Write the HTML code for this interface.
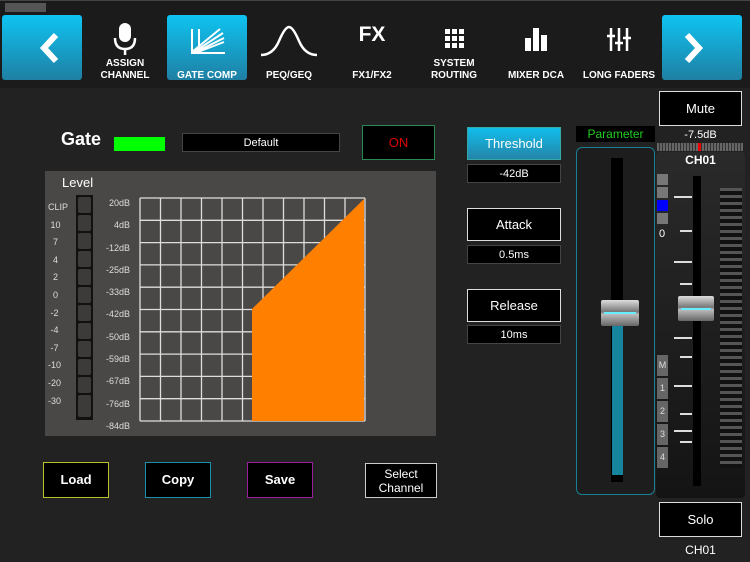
<!DOCTYPE html><html><head><style>
*{margin:0;padding:0;box-sizing:border-box}
body{width:750px;height:562px;background:#222;font-family:"Liberation Sans",sans-serif;position:relative;overflow:hidden;color:#fff}
.a{position:absolute}
.nav{top:15px;width:80px;height:65px;background:linear-gradient(#0ec4f2,#1f7fa3);border-radius:3px}
.tab{top:15px;width:80px;height:65px;text-align:center;font-size:10px;font-weight:bold;line-height:12px}
.tab .l{position:absolute;bottom:-2px;left:0;right:0}
.btn{border:1px solid #ddd;background:#000;text-align:center;font-size:13px}
.val{background:#000;border:1px solid #444;font-size:11px;text-align:center;line-height:18px}
</style></head><body>
<div class="a" style="left:0;top:0;width:750px;height:88px;background:#1b1b1b;border-top:1px solid #444"></div>
<div class="a" style="left:5px;top:3px;width:41px;height:9px;background:#555"></div>
<div class="a nav" style="left:2px"><svg width="80" height="65"><path d="M54 20 L42 33 L54 46" stroke="#fff" stroke-width="6" fill="none"/></svg></div>
<div class="a tab" style="left:85px"><svg width="80" height="44"><rect x="34" y="8" width="12" height="19" rx="6" fill="#fff"/><path d="M30 23 Q30 34 40 34 Q50 34 50 23" stroke="#fff" stroke-width="2.5" fill="none"/><rect x="38.8" y="34" width="2.5" height="6" fill="#fff"/></svg><div class="l">ASSIGN<br>CHANNEL</div></div>
<div class="a tab" style="left:167px;background:linear-gradient(#0ec4f2,#1f7fa3);border-radius:3px"><svg width="80" height="44"><path d="M25 14 V38 H58 M25 37 L53 14 M27 37 L56 18 M29 37 L57 23 M31 37 L57 27" stroke="#fff" stroke-width="2" fill="none"/><path d="M32 14 V31" stroke="#fff" stroke-width="2"/></svg><div class="l">GATE COMP</div></div>
<div class="a tab" style="left:249px"><svg width="80" height="44"><path d="M12 40 Q24 40 30 26 Q36 12 40 12 Q44 12 50 26 Q56 40 68 40" stroke="#fff" stroke-width="2.5" fill="none"/></svg><div class="l">PEQ/GEQ</div></div>
<div class="a tab" style="left:332px"><div style="font-size:21px;padding-top:14px">FX</div><div class="l">FX1/FX2</div></div>
<div class="a tab" style="left:414px"><svg width="80" height="44"><g fill="#fff"><rect x="31" y="14" width="5" height="5"/><rect x="38" y="14" width="5" height="5"/><rect x="45" y="14" width="5" height="5"/><rect x="31" y="21" width="5" height="5"/><rect x="38" y="21" width="5" height="5"/><rect x="45" y="21" width="5" height="5"/><rect x="31" y="28" width="5" height="5"/><rect x="38" y="28" width="5" height="5"/><rect x="45" y="28" width="5" height="5"/></g></svg><div class="l">SYSTEM<br>ROUTING</div></div>
<div class="a tab" style="left:496px"><svg width="80" height="44"><g fill="#fff"><rect x="29" y="23" width="6" height="13"/><rect x="37" y="13" width="6" height="23"/><rect x="45" y="20" width="6" height="16"/></g></svg><div class="l">MIXER DCA</div></div>
<div class="a tab" style="left:579px"><svg width="80" height="44"><g stroke="#fff" stroke-width="2.5"><path d="M32 13V36M40 13V36M48 13V36M28 21H36M36 28H44M44 23H52"/></g></svg><div class="l">LONG FADERS</div></div>
<div class="a nav" style="left:662px"><svg width="80" height="65"><path d="M25 20 L37 33 L25 46" stroke="#fff" stroke-width="6" fill="none"/></svg></div>

<div class="a" style="left:61px;top:129px;font-size:18px;font-weight:bold">Gate</div>
<div class="a" style="left:114px;top:137px;width:51px;height:14px;background:#0f0"></div>
<div class="a val" style="left:182px;top:133px;width:158px;height:19px;font-size:11px">Default</div>
<div class="a" style="left:362px;top:125px;width:73px;height:35px;background:#000;border:1px solid #2a8a55;color:#d00;font-size:13px;text-align:center;line-height:33px">ON</div>

<div class="a" style="left:45px;top:171px;width:391px;height:265px;background:#4a4847"></div>
<div class="a" style="left:62px;top:175px;font-size:13px">Level</div>
<div class="a" style="left:76px;top:195px;width:17px;height:225px;background:#111"></div>
<svg class="a" style="left:76px;top:195px" width="17" height="225"><g fill="#3d3b3a">
<rect x="2" y="2" width="13" height="16" rx="2"/><rect x="2" y="20" width="13" height="16" rx="2"/><rect x="2" y="38" width="13" height="16" rx="2"/><rect x="2" y="56" width="13" height="16" rx="2"/><rect x="2" y="74" width="13" height="16" rx="2"/><rect x="2" y="92" width="13" height="16" rx="2"/><rect x="2" y="110" width="13" height="16" rx="2"/><rect x="2" y="128" width="13" height="16" rx="2"/><rect x="2" y="146" width="13" height="16" rx="2"/><rect x="2" y="164" width="13" height="16" rx="2"/><rect x="2" y="182" width="13" height="16" rx="2"/><rect x="2" y="200" width="13" height="22" rx="2"/></g></svg>
<div class="a" style="left:48px;top:199px;font-size:9px;color:#ddd;line-height:17.6px;width:22px">CLIP<br>&nbsp;10<br>&nbsp;&nbsp;7<br>&nbsp;&nbsp;4<br>&nbsp;&nbsp;2<br>&nbsp;&nbsp;0<br>&nbsp;-2<br>&nbsp;-4<br>&nbsp;-7<br>-10<br>-20<br>-30</div>
<div class="a" style="left:90px;top:192px;font-size:9px;color:#ddd;line-height:22.3px;width:40px;text-align:right">20dB<br>4dB<br>-12dB<br>-25dB<br>-33dB<br>-42dB<br>-50dB<br>-59dB<br>-67dB<br>-76dB<br>-84dB</div>
<svg class="a" style="left:138px;top:196px" width="230" height="228">
<g stroke="#ddd" stroke-width="1.3">
<path d="M2 2V225M22.5 2V225M43 2V225M63.5 2V225M84 2V225M104.5 2V225M125 2V225M145.5 2V225M166 2V225M186.5 2V225M207 2V225M227 2V225"/>
<path d="M2 2H227M2 24.3H227M2 46.6H227M2 68.9H227M2 91.2H227M2 113.5H227M2 135.8H227M2 158.1H227M2 180.4H227M2 202.7H227M2 225H227"/>
</g>
<polygon points="114,225 114,113 226,3 226,225" fill="#ff8000"/>
</svg>

<div class="a" style="left:467px;top:127px;width:94px;height:33px;background:linear-gradient(#11bdeb,#2585a8);border:1px solid #3aa;text-align:center;line-height:31px;font-size:13px">Threshold</div>
<div class="a val" style="left:467px;top:164px;width:94px;height:19px">-42dB</div>
<div class="a btn" style="left:467px;top:208px;width:94px;height:33px;line-height:31px">Attack</div>
<div class="a val" style="left:467px;top:245px;width:94px;height:19px">0.5ms</div>
<div class="a btn" style="left:467px;top:289px;width:94px;height:33px;line-height:31px">Release</div>
<div class="a val" style="left:467px;top:325px;width:94px;height:19px">10ms</div>

<div class="a" style="left:43px;top:462px;width:66px;height:36px;background:#000;border:1px solid #b9bd2a;text-align:center;line-height:34px;font-size:13px;font-weight:bold">Load</div>
<div class="a" style="left:145px;top:462px;width:66px;height:36px;background:#000;border:1px solid #1a8fab;text-align:center;line-height:34px;font-size:13px;font-weight:bold">Copy</div>
<div class="a" style="left:247px;top:462px;width:66px;height:36px;background:#000;border:1px solid #9a1f9e;text-align:center;line-height:34px;font-size:13px;font-weight:bold">Save</div>
<div class="a" style="left:365px;top:463px;width:72px;height:35px;background:#000;border:1px solid #ccc;text-align:center;font-size:12px;line-height:14px;padding-top:3px">Select<br>Channel</div>

<div class="a" style="left:576px;top:126px;width:79px;height:16px;background:#000;color:#2c2;font-size:12px;text-align:center;line-height:16px">Parameter</div>
<div class="a" style="left:576px;top:147px;width:79px;height:348px;border:1.5px solid #1a7e95;border-radius:6px;background:#1d1d1d"></div>
<div class="a" style="left:611px;top:158px;width:12px;height:324px;background:#000"></div>
<div class="a" style="left:612px;top:322px;width:11px;height:153px;background:#16849d"></div>
<div class="a" style="left:601px;top:300px;width:38px;height:26px;background:linear-gradient(#ddd,#777 45%,#bbb 55%,#666);border-radius:2px"></div>
<div class="a" style="left:604px;top:312px;width:32px;height:2px;background:#6ef"></div>

<div class="a btn" style="left:659px;top:91px;width:83px;height:35px;line-height:33px">Mute</div>
<div class="a" style="left:659px;top:129px;width:83px;text-align:center;font-size:11px">-7.5dB</div>
<div class="a" style="left:657px;top:143px;width:86px;height:8px;background:repeating-linear-gradient(90deg,#666 0 2px,#333 2px 3px)"></div>
<div class="a" style="left:698px;top:143px;width:3px;height:8px;background:#e00"></div>
<div class="a" style="left:656px;top:152px;width:89px;height:346px;background:linear-gradient(#2a2a2a,#141414);border-radius:4px"></div>
<div class="a" style="left:656px;top:153px;width:89px;text-align:center;font-size:12px;font-weight:bold">CH01</div>
<div class="a" style="left:657px;top:174px;width:11px;height:11px;background:#777"></div>
<div class="a" style="left:657px;top:187px;width:11px;height:11px;background:#777"></div>
<div class="a" style="left:657px;top:200px;width:11px;height:11px;background:#00f"></div>
<div class="a" style="left:657px;top:213px;width:11px;height:11px;background:#777"></div>
<div class="a" style="left:659px;top:228px;font-size:11px">0</div>
<div class="a" style="left:693px;top:176px;width:8px;height:310px;background:#000"></div>
<svg class="a" style="left:672px;top:190px" width="22" height="290"><g stroke="#ddd" stroke-width="2"><path d="M2 7H20M8 41H20M2 72H20M8 94H20M2 148H20M8 167H20M2 196H20M8 224H20M2 241H20M8 252H20"/></g></svg>
<div class="a" style="left:678px;top:296px;width:36px;height:25px;background:linear-gradient(#ddd,#777 45%,#bbb 55%,#666);border-radius:2px"></div>
<div class="a" style="left:681px;top:308px;width:30px;height:2px;background:#6ef"></div>
<div class="a" style="left:720px;top:188px;width:22px;height:280px;background:repeating-linear-gradient(#555 0 3px,#111 3px 7px)"></div>
<div class="a" style="left:657px;top:355px;width:11px;height:115px;font-size:9px;color:#ddd;text-align:center">
<div style="background:#666;height:21px;line-height:21px;margin-bottom:2px">M</div><div style="background:#666;height:21px;line-height:21px;margin-bottom:2px">1</div><div style="background:#666;height:21px;line-height:21px;margin-bottom:2px">2</div><div style="background:#666;height:21px;line-height:21px;margin-bottom:2px">3</div><div style="background:#666;height:21px;line-height:21px">4</div></div>
<div class="a btn" style="left:659px;top:502px;width:83px;height:35px;line-height:33px">Solo</div>
<div class="a" style="left:659px;top:543px;width:83px;text-align:center;font-size:12px">CH01</div>
</body></html>
